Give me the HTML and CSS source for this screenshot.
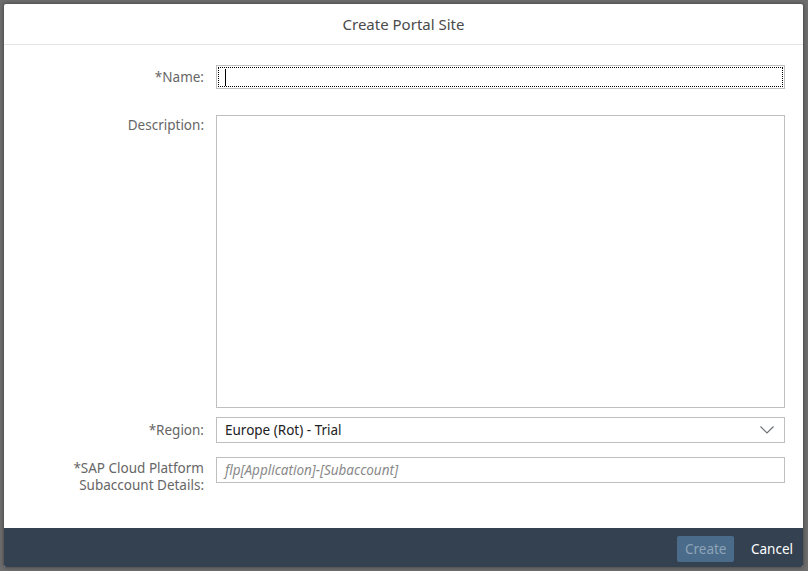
FILE: index.html
```html
<!DOCTYPE html>
<html>
<head>
<meta charset="utf-8">
<link rel="stylesheet" href="styles.css">
</head>
<body>
<div class="dialog">
  <header class="dialog-header">Create Portal Site</header>
  <main class="dialog-content">
    <div class="row row-name">
      <label class="label">*Name:</label>
      <div class="input input-focus"><span class="caret"></span></div>
    </div>
    <div class="row row-desc">
      <label class="label label-top">Description:</label>
      <div class="textarea"></div>
    </div>
    <div class="row row-region">
      <label class="label">*Region:</label>
      <div class="select">
        <span class="select-value">Europe (Rot) - Trial</span>
        <svg class="chevron" width="14" height="8" viewBox="0 0 14 8"><path d="M0.5 0.5 L7 7 L13.5 0.5" fill="none" stroke="#6a6d70" stroke-width="1.1"/></svg>
      </div>
    </div>
    <div class="row row-sap">
      <label class="label label-top2">*SAP Cloud Platform<br>Subaccount Details:</label>
      <div class="input"><span class="placeholder">flp[Application]-[Subaccount]</span></div>
    </div>
  </main>
  <footer class="dialog-footer">
    <button class="btn btn-create">Create</button>
    <button class="btn btn-cancel">Cancel</button>
  </footer>
</div>
</body>
</html>
```
FILE: styles.css
```css
html, body {
  margin: 0;
  padding: 0;
}
body {
  width: 808px;
  height: 571px;
  background: #6e6e6e;
  padding: 4px 5px 4px 4px;
  box-sizing: border-box;
  font-family: "Noto Sans", "Open Sans", sans-serif;
  overflow: hidden;
}
.dialog {
  height: 563px;
  background: #fff;
  display: flex;
  flex-direction: column;
  box-shadow: 0 0 4px rgba(0,0,0,0.5);
  border-radius: 2px;
  overflow: hidden;
}
.dialog-header {
  height: 40px;
  border-bottom: 1px solid #e5e5e5;
  display: flex;
  align-items: center;
  justify-content: center;
  font-size: 15px;
  color: #4a4a4a;
  flex-shrink: 0;
}
.dialog-content {
  flex: 1;
  padding: 20px 18px 0 0;
  display: flex;
  flex-direction: column;
}
.row {
  display: grid;
  grid-template-columns: 200px 1fr;
  column-gap: 12px;
  align-items: center;
}
.label {
  text-align: right;
  font-size: 13.5px;
  color: #666;
  line-height: 17px;
}
.row-desc {
  margin-top: 26px;
  align-items: start;
}
.label-top {
  padding-top: 2px;
}
.row-region {
  margin-top: 9px;
}
.row-sap {
  margin-top: 14px;
  align-items: start;
}
.label-top2 {
  padding-top: 3px;
}
.input, .select, .textarea {
  border: 1px solid #bfbfbf;
  background: #fff;
  box-sizing: border-box;
}
.input {
  height: 26px;
  display: flex;
  align-items: center;
  padding-left: 8px;
}
.row-name .input {
  height: 24px;
}
.input-focus {
  outline: 1px dotted #000;
  outline-offset: -3px;
}
.caret {
  width: 1px;
  height: 17px;
  background: #000;
}
.textarea {
  height: 293px;
}
.select {
  height: 26px;
  display: flex;
  align-items: center;
  justify-content: space-between;
  padding: 0 10px 0 8px;
}
.select-value {
  font-size: 13.5px;
  color: #222;
}
.chevron {
  display: block;
}
.placeholder {
  font-size: 13.5px;
  font-style: italic;
  color: #8a8a8a;
}
.dialog-footer {
  height: 39px;
  background: #344150;
  display: flex;
  align-items: center;
  justify-content: flex-end;
  gap: 9px;
  padding-right: 2px;
  padding-top: 2px;
  box-sizing: border-box;
  flex-shrink: 0;
}
.btn {
  font-family: "Noto Sans", "Open Sans", sans-serif;
  font-size: 13.5px;
  border: none;
  border-radius: 2px;
  height: 26px;
  padding: 0 8px;
  cursor: default;
}
.btn-create {
  background: #4a6b89;
  color: #8ea4b8;
  width: 57px;
}
.btn-cancel {
  background: transparent;
  color: #fff;
}
```
